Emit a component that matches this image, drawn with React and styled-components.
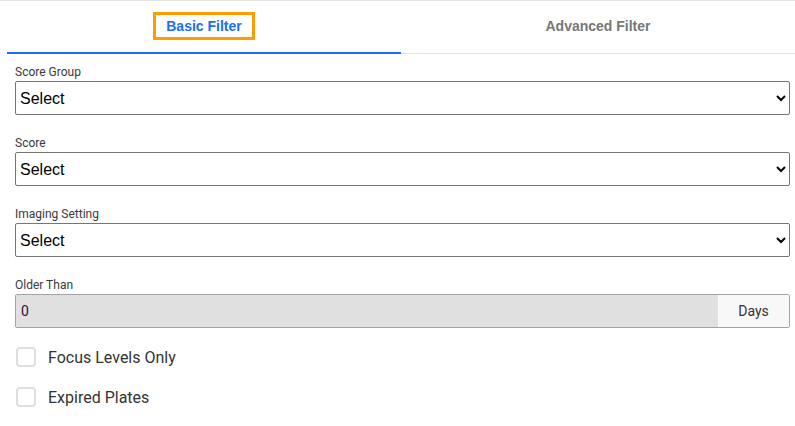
import React from "react";
import styled, { createGlobalStyle } from "styled-components";

const Global = createGlobalStyle`
  html, body { margin: 0; padding: 0; background: #fff; }
  body { font-family: Roboto, "Liberation Sans", sans-serif; }
  * { box-sizing: border-box; }
`;

const Page = styled.div`
  width: 795px;
  border-top: 1px solid #e4e4e4;
`;

const TabNav = styled.div`
  display: flex;
  margin-left: 7px;
  border-bottom: 1px solid #dfe3e8;
  height: 53px;
`;

const Tab = styled.div`
  flex: 1;
  display: flex;
  align-items: center;
  justify-content: center;
  position: relative;
  font-family: "Liberation Sans", Arial, sans-serif;
  font-weight: bold;
  font-size: 14px;
  color: ${(p) => (p.$active ? "#1a6ef2" : "#777")};
  &::after {
    content: "";
    position: absolute;
    left: 0;
    right: 0;
    bottom: -1px;
    height: 2px;
    background: ${(p) => (p.$active ? "#1a6ef2" : "transparent")};
  }
`;

const TabLabel = styled.span`
  display: inline-flex;
  align-items: center;
  justify-content: center;
  height: 28px;
  padding: 0 ${(p) => (p.$focused ? "10px" : "0")};
  border: ${(p) => (p.$focused ? "3px solid #ff9d00" : "none")};
  margin-bottom: 2px;
`;

const Form = styled.div`
  padding: 10px 5px 0 15px;
  display: flex;
  flex-direction: column;
`;

const Group = styled.div`
  display: flex;
  flex-direction: column;
  margin-bottom: ${(p) => p.$gap || 20}px;
`;

const Label = styled.label`
  font-size: 12px;
  line-height: 17px;
  color: #3a3a3a;
`;

const Select = styled.select`
  height: 34px;
  width: 100%;
  font-family: "Liberation Sans", Arial, sans-serif;
  font-size: 16px;
  color: #000;
  background: #fff;
  border: 1px solid #767676;
  border-radius: 2px;
  padding: 0;
  margin: 0;
`;

const InputGroup = styled.div`
  display: flex;
  height: 34px;
  border: 1px solid #a3a3a3;
  border-radius: 2px;
  overflow: hidden;
`;

const Input = styled.input`
  flex: 1;
  border: none;
  background: #e0e0e0;
  font-family: Roboto, sans-serif;
  font-size: 14px;
  color: #2a1040;
  padding: 0 5px;
  outline: none;
`;

const Addon = styled.div`
  width: 71px;
  display: flex;
  align-items: center;
  justify-content: center;
  background: #f8f8f8;
  font-size: 14px;
  color: #333;
`;

const Checks = styled.div`
  display: flex;
  flex-direction: column;
  gap: 20px;
`;

const CheckRow = styled.label`
  display: flex;
  align-items: center;
  height: 20px;
  gap: 12px;
  font-size: 16px;
  line-height: 19px;
  color: #333;
  padding-left: 1px;
`;

const Box = styled.span`
  width: 20px;
  height: 20px;
  border: 2px solid #dedede;
  border-radius: 4px;
  background: #fff;
`;

const fields = ["Score Group", "Score", "Imaging Setting"];

export default function App() {
  return (
    <>
      <Global />
      <Page>
        <TabNav>
          <Tab $active>
            <TabLabel $focused>Basic Filter</TabLabel>
          </Tab>
          <Tab>
            <TabLabel>Advanced Filter</TabLabel>
          </Tab>
        </TabNav>
        <Form>
          {fields.map((f) => (
            <Group key={f}>
              <Label>{f}</Label>
              <Select defaultValue="">
                <option value="">Select</option>
              </Select>
            </Group>
          ))}
          <Group $gap={19}>
            <Label>Older Than</Label>
            <InputGroup>
              <Input defaultValue="0" />
              <Addon>Days</Addon>
            </InputGroup>
          </Group>
          <Checks>
            <CheckRow>
              <Box />
              Focus Levels Only
            </CheckRow>
            <CheckRow>
              <Box />
              Expired Plates
            </CheckRow>
          </Checks>
        </Form>
      </Page>
    </>
  );
}
